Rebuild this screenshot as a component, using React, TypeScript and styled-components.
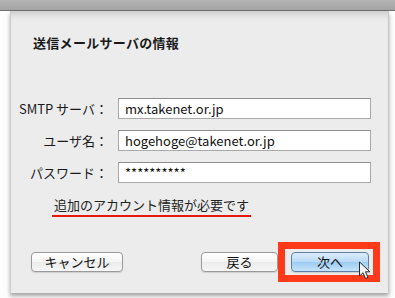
import React from 'react';
import styled, { createGlobalStyle } from 'styled-components';

const GlobalStyle = createGlobalStyle`
  html, body {
    margin: 0;
    padding: 0;
    background: #ffffff;
  }
  body {
    font-family: "Noto Sans CJK JP", "DejaVu Sans", sans-serif;
    color: #1a1a1a;
  }
`;

const Screen = styled.div`
  width: 395px;
  height: 298px;
  position: relative;
  overflow: hidden;
  background: #fdfdfd;
`;

const TitleBar = styled.div`
  height: 10px;
  background: linear-gradient(#b4b4b4, #a4a4a4);
  border-bottom: 1px solid #6f6f6f;
`;

const Sheet = styled.div`
  margin-left: 10px;
  width: 379px;
  height: 282px;
  background: #ececec;
  border-left: 1px solid #cfcfcf;
  border-right: 1px solid #c8c8c8;
  box-shadow: 0 3px 4px rgba(0, 0, 0, 0.35), inset 0 8px 8px -6px rgba(0, 0, 0, 0.18);
  display: flex;
  flex-direction: column;
  box-sizing: border-box;
  padding: 23px 0 0 0;
`;

const Heading = styled.div`
  margin-left: 22px;
  font-size: 13px;
  font-weight: 700;
  line-height: 18px;
  letter-spacing: 0.3px;
`;

const Form = styled.div`
  margin-top: 46px;
  display: grid;
  grid-template-columns: 97px 253px;
  column-gap: 10px;
  row-gap: 11px;
  align-items: center;
`;

const Label = styled.div`
  font-size: 13px;
  text-align: right;
  line-height: 20px;
  white-space: nowrap;
`;

const Field = styled.div`
  height: 21px;
  box-sizing: border-box;
  background: #ffffff;
  border: 1px solid #a9a9a9;
  border-top-color: #8e8e8e;
  padding: 0 6px;
  font-size: 13px;
  line-height: 19px;
  color: #111;
  white-space: nowrap;
  overflow: hidden;
`;

const Notice = styled.div`
  margin: 13px 0 0 41px;
  align-self: flex-start;
  font-size: 13px;
  line-height: 18px;
  padding: 0 2px 1px;
  border-bottom: 2px solid #e8190c;
  color: #222;
`;

const ButtonRow = styled.div`
  margin-top: 25px;
  display: flex;
  align-items: center;
  padding-left: 20px;
`;

const Button = styled.div<{ $primary?: boolean; $width: number }>`
  width: ${(p) => p.$width}px;
  height: 20px;
  box-sizing: border-box;
  border-radius: 4px;
  border: 1px solid ${(p) => (p.$primary ? '#5d7fa8' : '#9a9a9a')};
  background: ${(p) =>
    p.$primary
      ? 'linear-gradient(#dcecfb 0%, #b8d9f6 50%, #9ccbf2 51%, #c6e4fb 100%)'
      : 'linear-gradient(#ffffff 0%, #f4f4f4 50%, #ebebeb 51%, #f7f7f7 100%)'};
  display: flex;
  align-items: center;
  justify-content: center;
  font-size: 13px;
  line-height: 18px;
  color: #111;
  box-shadow: 0 1px 1px rgba(0, 0, 0, 0.12);
`;

const Spacer = styled.div`
  flex: 1;
`;

const Highlight = styled.div`
  position: relative;
  border: 7px solid #ff3a1a;
  padding: 3px 4px 3px 6px;
  margin-right: 8px;
  display: flex;
`;

const Cursor = styled.svg`
  position: absolute;
  right: 1px;
  bottom: -5px;
`;

export default function App() {
  return (
    <Screen>
      <GlobalStyle />
      <TitleBar />
      <Sheet>
        <Heading>送信メールサーバの情報</Heading>
        <Form>
          <Label>SMTP サーバ：</Label>
          <Field>mx.takenet.or.jp</Field>
          <Label>ユーザ名：</Label>
          <Field>hogehoge@takenet.or.jp</Field>
          <Label>パスワード：</Label>
          <Field>**********</Field>
        </Form>
        <Notice>追加のアカウント情報が必要です</Notice>
        <ButtonRow>
          <Button $width={92}>キャンセル</Button>
          <Spacer />
          <Button $width={77}>戻る</Button>
          <Highlight>
            <Button $primary $width={78}>次へ</Button>
            <Cursor width="14" height="19" viewBox="0 0 14 19">
              <path
                d="M1.5 1 L1.5 15 L5 11.8 L7.5 17.5 L10 16.4 L7.5 10.8 L12 10.8 Z"
                fill="#f2f2f2"
                stroke="#2a2a2a"
                strokeWidth="1"
                strokeLinejoin="round"
              />
            </Cursor>
          </Highlight>
        </ButtonRow>
      </Sheet>
    </Screen>
  );
}
